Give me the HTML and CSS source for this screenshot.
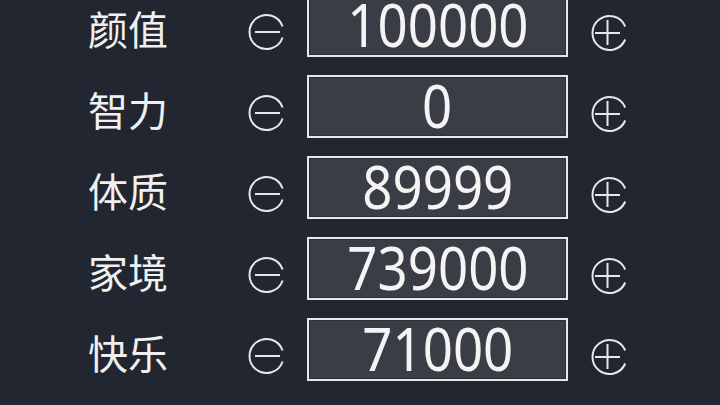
FILE: index.html
```html
<!DOCTYPE html>
<html lang="zh">
<head>
<meta charset="utf-8">
<link rel="stylesheet" href="styles.css">
</head>
<body>
<div class="list">
  <div class="row">
    <div class="label">颜值</div>
    <svg class="btn minus" viewBox="0 0 38 38"><path d="M35.6 13.5 A17 17 0 1 0 35.6 24.5" /><path d="M8 19 H33" /></svg>
    <div class="box"><span class="num">100000</span></div>
    <svg class="btn plus" viewBox="0 0 38 38"><path d="M35.2 12.5 A17 17 0 1 0 35.2 25.5" /><path d="M5 19 H30 M17.5 6 V31" /></svg>
  </div>
  <div class="row">
    <div class="label">智力</div>
    <svg class="btn minus" viewBox="0 0 38 38"><path d="M35.6 13.5 A17 17 0 1 0 35.6 24.5" /><path d="M8 19 H33" /></svg>
    <div class="box"><span class="num">0</span></div>
    <svg class="btn plus" viewBox="0 0 38 38"><path d="M35.2 12.5 A17 17 0 1 0 35.2 25.5" /><path d="M5 19 H30 M17.5 6 V31" /></svg>
  </div>
  <div class="row">
    <div class="label">体质</div>
    <svg class="btn minus" viewBox="0 0 38 38"><path d="M35.6 13.5 A17 17 0 1 0 35.6 24.5" /><path d="M8 19 H33" /></svg>
    <div class="box"><span class="num">89999</span></div>
    <svg class="btn plus" viewBox="0 0 38 38"><path d="M35.2 12.5 A17 17 0 1 0 35.2 25.5" /><path d="M5 19 H30 M17.5 6 V31" /></svg>
  </div>
  <div class="row">
    <div class="label">家境</div>
    <svg class="btn minus" viewBox="0 0 38 38"><path d="M35.6 13.5 A17 17 0 1 0 35.6 24.5" /><path d="M8 19 H33" /></svg>
    <div class="box"><span class="num">739000</span></div>
    <svg class="btn plus" viewBox="0 0 38 38"><path d="M35.2 12.5 A17 17 0 1 0 35.2 25.5" /><path d="M5 19 H30 M17.5 6 V31" /></svg>
  </div>
  <div class="row">
    <div class="label">快乐</div>
    <svg class="btn minus" viewBox="0 0 38 38"><path d="M35.6 13.5 A17 17 0 1 0 35.6 24.5" /><path d="M8 19 H33" /></svg>
    <div class="box"><span class="num">71000</span></div>
    <svg class="btn plus" viewBox="0 0 38 38"><path d="M35.2 12.5 A17 17 0 1 0 35.2 25.5" /><path d="M5 19 H30 M17.5 6 V31" /></svg>
  </div>
</div>
</body>
</html>
```
FILE: styles.css
```css
html, body {
  margin: 0;
  padding: 0;
  width: 720px;
  height: 405px;
  overflow: hidden;
  background: #222630;
}
.list {
  display: flex;
  flex-direction: column;
  gap: 18px;
  margin-top: -6px;
}
.row {
  display: flex;
  align-items: center;
  height: 63px;
}
.label {
  flex: none;
  width: 247px;
  padding-left: 88px;
  padding-top: 5px;
  box-sizing: border-box;
  white-space: nowrap;
  font-family: "Noto Sans CJK SC", sans-serif;
  font-size: 40px;
  line-height: 50px;
  color: #f0f0f0;
}
.btn {
  width: 38px;
  height: 38px;
  margin-top: 12px;
  fill: none;
  stroke: #e8e8e8;
  stroke-width: 2;
  flex: none;
}
.plus {
  margin-left: 22px;
  margin-top: 14px;
}
.box {
  width: 261px;
  height: 63px;
  margin-left: 22px;
  box-sizing: border-box;
  border: 2px solid #e8e8e8;
  box-shadow: inset 0 0 0 1px #2c2f36;
  background: #3a3d45;
  display: flex;
  align-items: center;
  justify-content: center;
  flex: none;
}
.num {
  font-family: "Noto Sans", sans-serif;
  font-weight: 400;
  font-size: 60px;
  line-height: 60px;
  color: #f4f4f4;
  display: inline-block;
  transform: scaleX(0.88);
  margin-top: -4px;
}
```
